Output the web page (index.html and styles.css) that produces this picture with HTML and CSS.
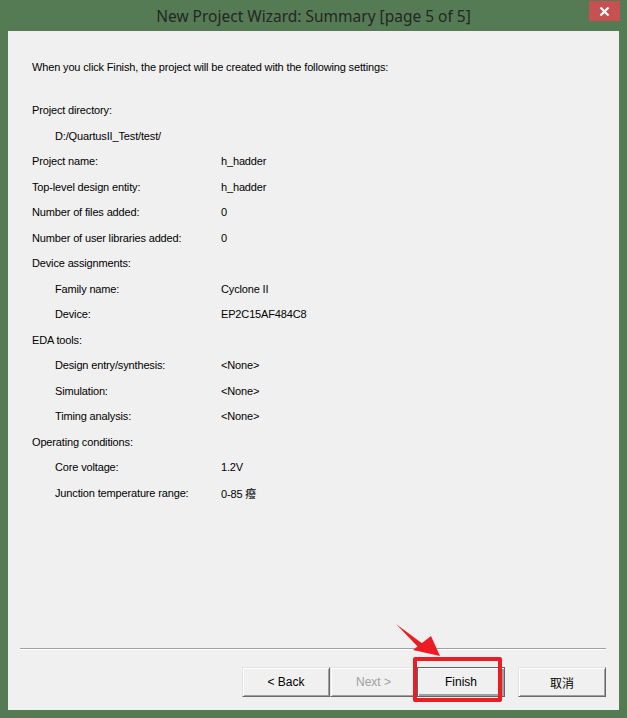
FILE: index.html
```html
<!DOCTYPE html>
<html lang="en">
<head>
  <meta charset="UTF-8" />
  <title>New Project Wizard: Summary [page 5 of 5]</title>
  <link rel="stylesheet" href="styles.css">
</head>
<body>
  <div class="window">
    <div class="titlebar">
      <span></span>
      <div class="title">New Project Wizard: Summary [page 5 of 5]</div>
      <div class="close">
        <svg width="11" height="9" viewBox="0 0 11 9"><path d="M1.5 0.5 L9.5 8.5 M9.5 0.5 L1.5 8.5" stroke="#fff" stroke-width="2.2" fill="none"/></svg>
      </div>
    </div>
    <div class="content">
      <div class="summary">
        <p class="intro">When you click Finish, the project will be created with the following settings:</p>
        <div class="rows">
          <div class="label">Project directory:</div><div></div>
          <div class="label sub">D:/QuartusII_Test/test/</div><div></div>
          <div class="label">Project name:</div><div>h_hadder</div>
          <div class="label">Top-level design entity:</div><div>h_hadder</div>
          <div class="label">Number of files added:</div><div>0</div>
          <div class="label">Number of user libraries added:</div><div>0</div>
          <div class="label">Device assignments:</div><div></div>
          <div class="label sub">Family name:</div><div>Cyclone II</div>
          <div class="label sub">Device:</div><div>EP2C15AF484C8</div>
          <div class="label">EDA tools:</div><div></div>
          <div class="label sub">Design entry/synthesis:</div><div>&lt;None&gt;</div>
          <div class="label sub">Simulation:</div><div>&lt;None&gt;</div>
          <div class="label sub">Timing analysis:</div><div>&lt;None&gt;</div>
          <div class="label">Operating conditions:</div><div></div>
          <div class="label sub">Core voltage:</div><div>1.2V</div>
          <div class="label sub">Junction temperature range:</div><div>0-85 <span class="cjk">癈</span></div>
        </div>
      </div>
      <div class="footer">
        <div class="separator"></div>
        <div class="buttons">
          <button class="btn back">&lt; Back</button>
          <button class="btn next" disabled>Next &gt;</button>
          <button class="btn finish">Finish</button>
          <button class="btn cancel"><span class="cjk">取消</span></button>
        </div>
      </div>
    </div>

    <!-- red annotation drawn over the screenshot -->
    <div class="mark-box"></div>
    <svg class="mark-arrow" width="60" height="45" viewBox="0 0 60 45">
      <path d="M1 1 L28 21 L24 25 Z" fill="#ec1c24"/>
      <path d="M18 27 L36 13 L45 33 Z" fill="#ec1c24"/>
    </svg>
  </div>
</body>
</html>
```

FILE: styles.css
```css
body {
  margin: 0;
  padding: 0;
  background: #547b54;
  font-family: "Liberation Sans", Arial, sans-serif;
}
.window {
  position: relative;
  width: 627px;
  height: 718px;
  background: #547b54;
  display: flex;
  flex-direction: column;
}
.titlebar {
  height: 31px;
  display: grid;
  grid-template-columns: 1fr auto 1fr;
  align-items: start;
}
.title {
  font-family: "Noto Sans", "Open Sans", sans-serif;
  font-size: 15.5px;
  color: #262626;
  line-height: 20px;
  margin-top: 6px;
}
.close {
  justify-self: end;
  width: 31px;
  height: 20px;
  margin-top: 1px;
  margin-right: 7px;
  background: #c75050;
  display: flex;
  align-items: center;
  justify-content: center;
}
.content {
  flex: 1;
  margin: 0 8px 8px 8px;
  background: #f0f0f0;
  display: flex;
  flex-direction: column;
}
.summary {
  flex: 1;
  padding: 24px 0 0 24px;
  font-size: 11px;
  letter-spacing: -0.15px;
  color: #000;
}
.intro {
  margin: 0 0 17px 0;
  line-height: 25.5px;
}
.rows {
  display: grid;
  grid-template-columns: 189px 1fr;
  grid-auto-rows: 25.5px;
  align-items: center;
}
.label.sub {
  padding-left: 23px;
}
.cjk {
  font-family: "Noto Sans CJK SC", sans-serif;
}
.footer {
  padding: 0 13px 13px 12px;
}
.separator {
  height: 1px;
  background: #a0a0a0;
  border-bottom: 1px solid #fff;
}
.buttons {
  margin-top: 17px;
  display: flex;
  justify-content: flex-end;
}
.btn {
  width: 88px;
  height: 30px;
  padding: 0;
  font-family: "Liberation Sans", Arial, sans-serif;
  font-size: 12px;
  color: #000;
  background: #f0f0f0;
  border: 1px solid;
  border-color: #e3e3e3 #696969 #696969 #e3e3e3;
  box-shadow: inset 1px 1px #fff, inset -1px -1px #a0a0a0;
}
.btn.next {
  width: 87px;
  color: #a0a0a0;
}
.btn.finish {
  border-color: #646464;
  box-shadow: inset 1px 1px #fff, inset -2px -2px #a0a0a0;
}
.btn.cancel {
  margin-left: 13px;
}
/* Red annotation over the Finish button */
.mark-box {
  position: absolute;
  left: 413px;
  top: 657px;
  width: 81px;
  height: 37px;
  border: 4px solid #ec1c24;
  border-radius: 2px;
}
.mark-arrow {
  position: absolute;
  left: 395px;
  top: 623px;
}
```
